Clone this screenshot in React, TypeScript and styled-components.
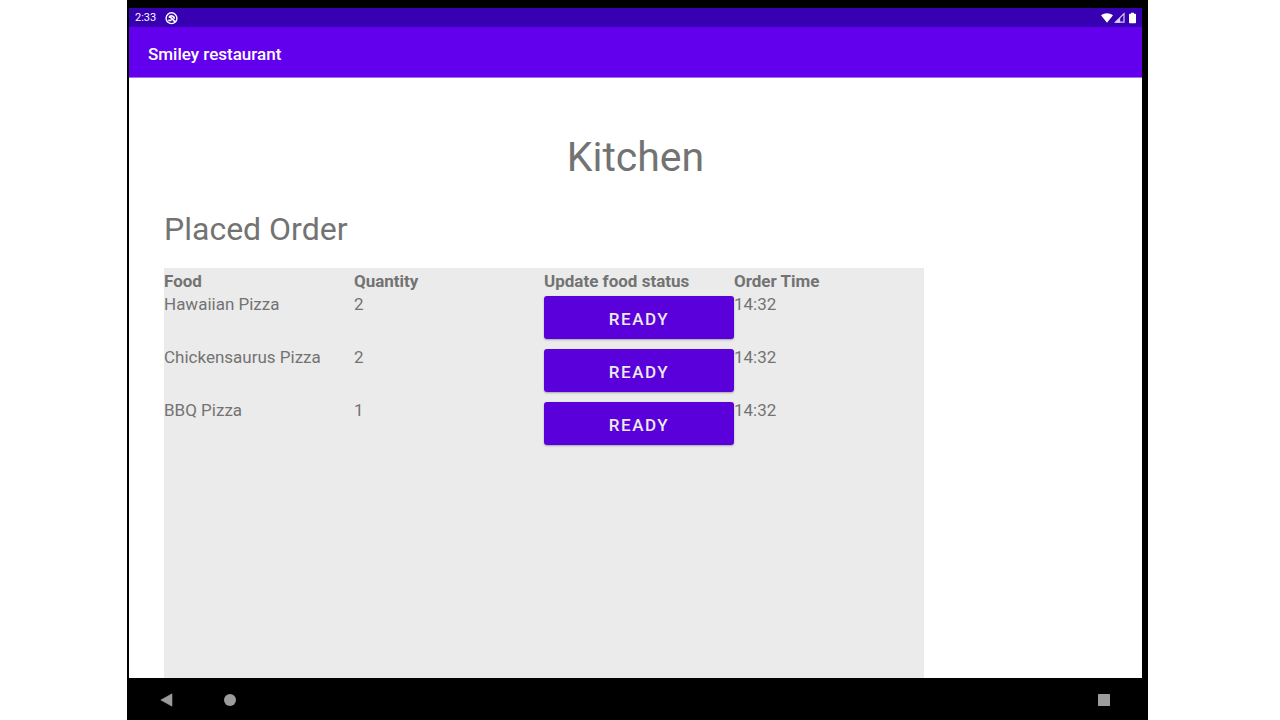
import React from 'react';
import styled, { createGlobalStyle } from 'styled-components';

const GlobalStyle = createGlobalStyle`
  * { box-sizing: border-box; }
  body {
    margin: 0;
    background: #ffffff;
    color: #737373;
    font-family: Roboto, "Liberation Sans", sans-serif;
  }
`;

const Page = styled.div`
  display: flex;
  min-height: 100vh;
  padding: 0 132px 0 127px;
`;

const Device = styled.div`
  flex: 1;
  min-width: 0;
  display: flex;
  flex-direction: column;
  padding: 8px 6px 0 2px;
  background: #000000;
`;

const StatusBar = styled.div`
  display: flex;
  align-items: center;
  justify-content: space-between;
  height: 19px;
  padding: 1px 6px 0;
  background: #3700b3;
  color: #ffffff;
  font-size: 11px;
  line-height: 20px;
`;

const StatusGroup = styled.div<{ $gap: number }>`
  display: flex;
  align-items: center;
  gap: ${({ $gap }) => $gap}px;
  svg { display: block; }
`;

const AppBar = styled.header`
  display: flex;
  align-items: center;
  height: 51px;
  padding: 3px 19px 0;
  background: #6200ee;
  border-bottom: 1px solid #a56ff5;
  color: #ffffff;
  font-size: 17px;
  font-weight: 500;
  line-height: 20px;
`;

const Content = styled.main`
  flex: 1;
  display: flex;
  flex-direction: column;
  padding: 55px 0 0 35px;
  background: #ffffff;
`;

const Title = styled.h1`
  margin: 0;
  padding-right: 35px;
  font-size: 41px;
  font-weight: 400;
  line-height: 48px;
  text-align: center;
`;

const SectionTitle = styled.h2`
  margin: 28px 0 19px;
  font-size: 32px;
  font-weight: 400;
  line-height: 40px;
`;

const OrdersPanel = styled.section`
  flex: 1;
  width: 100%;
  max-width: 760px;
  background: #ebebeb;
`;

const OrdersTable = styled.table`
  width: 100%;
  border-collapse: collapse;
  table-layout: fixed;
  font-size: 17px;
  line-height: 22px;
`;

const HeadCell = styled.th`
  padding: 2px 0 0;
  font-weight: 700;
  text-align: left;
  white-space: nowrap;
`;

const Cell = styled.td`
  height: 53px;
  padding: 1px 0 0;
  vertical-align: top;
  white-space: nowrap;
`;

const ActionCell = styled(Cell)`
  padding: 4px 0 0;
`;

const ReadyButton = styled.button`
  display: block;
  width: 100%;
  height: 43px;
  padding: 2px 0 0;
  border: 0;
  border-radius: 3px;
  background: #5a00db;
  box-shadow: 0 1px 2px rgba(0, 0, 0, 0.3);
  color: #ebebeb;
  font-family: inherit;
  font-size: 17px;
  font-weight: 500;
  letter-spacing: 0.09em;
  line-height: 20px;
  text-transform: uppercase;
  cursor: pointer;
`;

const NavBar = styled.nav`
  display: flex;
  align-items: center;
  height: 42px;
  padding: 2px 32px 0 31px;
`;

const NavButton = styled.button<{ $end?: boolean }>`
  display: block;
  margin-left: ${({ $end }) => ($end ? 'auto' : '0')};
  margin-right: ${({ $end }) => ($end ? '0' : '50px')};
  padding: 0;
  border: 0;
  background: none;
  cursor: pointer;
  svg { display: block; }
`;

const orders = [
  { food: 'Hawaiian Pizza', quantity: 2, time: '14:32' },
  { food: 'Chickensaurus Pizza', quantity: 2, time: '14:32' },
  { food: 'BBQ Pizza', quantity: 1, time: '14:32' },
];

const AppIcon = () => (
  <svg width="13" height="13" viewBox="0 0 13 13" fill="none" stroke="#fff" aria-hidden="true">
    <circle cx="6.5" cy="6.2" r="5.4" strokeWidth="1.4" />
    <path d="M4 5.6A2.7 2.7 0 0 1 9.2 6.8" strokeWidth="1.7" />
    <path d="M4.8 4.6 10.2 9.8M3.2 8.4h3.4" strokeWidth="1.6" />
  </svg>
);

const WifiIcon = () => (
  <svg width="12" height="12" viewBox="0 0 12 12" aria-hidden="true">
    <path d="M0 3.3C3.5.5 8.5.5 12 3.3L6 10.8Z" fill="#fff" />
  </svg>
);

const SignalIcon = () => (
  <svg width="11" height="12" viewBox="0 0 11 12" aria-hidden="true">
    <path d="M10 1.7V10.2H1.5Z" fill="none" stroke="#d9cdf2" strokeWidth="1.2" />
    <path d="M6.2 5.6V10.7H0.5Z" fill="#d9cdf2" />
  </svg>
);

const BatteryIcon = () => (
  <svg width="7" height="12" viewBox="0 0 7 12" aria-hidden="true">
    <path d="M2 .8H5V1.8H6.2Q7 1.8 7 2.6V10.4Q7 11.2 6.2 11.2H.8Q0 11.2 0 10.4V2.6Q0 1.8.8 1.8H2Z" fill="#fff" />
  </svg>
);

export default function App() {
  return (
    <>
      <GlobalStyle />
      <Page>
        <Device>
          <StatusBar>
            <StatusGroup $gap={9}>
              <span>2:33</span>
              <AppIcon />
            </StatusGroup>
            <StatusGroup $gap={4}>
              <StatusGroup $gap={1}>
                <WifiIcon />
                <SignalIcon />
              </StatusGroup>
              <BatteryIcon />
            </StatusGroup>
          </StatusBar>
          <AppBar>Smiley restaurant</AppBar>
          <Content>
            <Title>Kitchen</Title>
            <SectionTitle>Placed Order</SectionTitle>
            <OrdersPanel>
              <OrdersTable>
                <thead>
                  <tr>
                    <HeadCell scope="col">Food</HeadCell>
                    <HeadCell scope="col">Quantity</HeadCell>
                    <HeadCell scope="col">Update food status</HeadCell>
                    <HeadCell scope="col">Order Time</HeadCell>
                  </tr>
                </thead>
                <tbody>
                  {orders.map((order) => (
                    <tr key={order.food}>
                      <Cell>{order.food}</Cell>
                      <Cell>{order.quantity}</Cell>
                      <ActionCell>
                        <ReadyButton type="button">Ready</ReadyButton>
                      </ActionCell>
                      <Cell>{order.time}</Cell>
                    </tr>
                  ))}
                </tbody>
              </OrdersTable>
            </OrdersPanel>
          </Content>
          <NavBar>
            <NavButton type="button" aria-label="Back">
              <svg width="14" height="14" viewBox="0 0 14 14">
                <path d="M12 .8V13.2L.8 7Z" fill="#9c9c9c" stroke="#9c9c9c" strokeWidth=".6" strokeLinejoin="round" />
              </svg>
            </NavButton>
            <NavButton type="button" aria-label="Home">
              <svg width="12" height="12" viewBox="0 0 12 12">
                <circle cx="6" cy="6" r="6" fill="#9c9c9c" />
              </svg>
            </NavButton>
            <NavButton type="button" aria-label="Recent apps" $end>
              <svg width="12" height="12" viewBox="0 0 12 12">
                <rect width="12" height="12" rx=".5" fill="#9c9c9c" />
              </svg>
            </NavButton>
          </NavBar>
        </Device>
      </Page>
    </>
  );
}
